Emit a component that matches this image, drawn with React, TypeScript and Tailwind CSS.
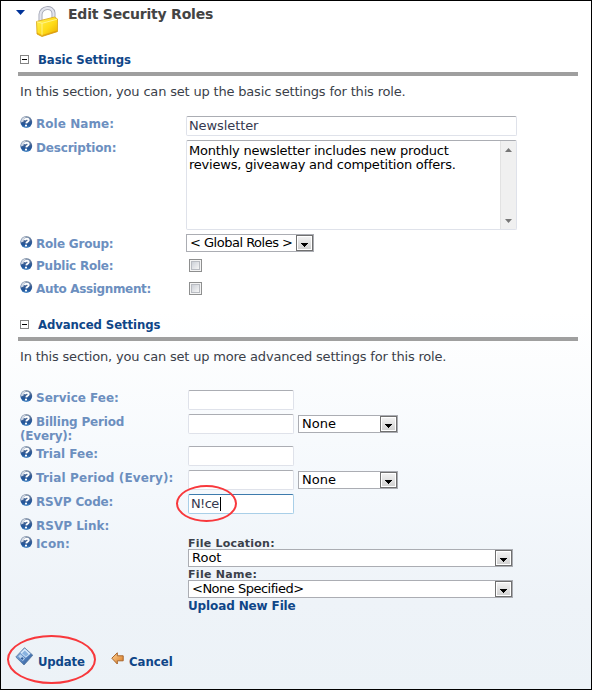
import type { ReactNode } from "react";

function HelpIcon() {
  return (
    <svg width="13" height="13" viewBox="0 0 13 13" className="mr-[3px] shrink-0">
      <defs>
        <linearGradient id="help" x1="0" y1="0" x2="0" y2="1">
          <stop offset="0" stopColor="#8d9bad" />
          <stop offset="0.45" stopColor="#3c5f94" />
          <stop offset="0.75" stopColor="#1f5499" />
          <stop offset="1" stopColor="#4a8ac8" />
        </linearGradient>
      </defs>
      <circle cx="6.3" cy="6" r="5.9" fill="url(#help)" />
      <path d="M1.200 6.500C.6 3.200 3 .9 6.300.7 4.600 1.800 3.600 3.400 3.600 5.600z" fill="#fff" opacity=".75" />
      <path d="M4.400 4C5.600 2.200 9 2.400 8.700 4.400 8.500 5.800 6.500 5.900 6.300 7.400" fill="none" stroke="#fff" strokeWidth="1.900" />
      <circle cx="6" cy="9.600" r="1.100" fill="#fff" />
    </svg>
  );
}

function Row({ label, height, labelClass = "", children }: { label: ReactNode; height: string; labelClass?: string; children?: ReactNode }) {
  return (
    <div className={`flex items-start ${height}`}>
      <div className={`flex w-[168px] shrink-0 items-start text-[12px] leading-[14px] font-bold whitespace-nowrap text-[#6c8fbf] ${labelClass}`}>
        <HelpIcon />
        <span className="pt-px">{label}</span>
      </div>
      {children}
    </div>
  );
}

function TextBox({ width, value = "", active = false }: { width: string; value?: string; active?: boolean }) {
  return (
    <div
      className={`flex h-5 shrink-0 items-center rounded-[2px] border bg-white pl-[2px] text-[13px] text-[#36394f] ${width} ${
        active ? "border-[#a9cfe8] border-t-[#3d7bad] tracking-[-0.6px]" : "border-[#dfe2ea] border-t-[#abadb3] tracking-[-0.1px]"
      }`}
    >
      <span>{value}</span>
      {active && <span className="ml-px h-[14px] w-px bg-black" />}
    </div>
  );
}

function SelectBox({ width, value, textClass = "" }: { width: string; value: string; textClass?: string }) {
  return (
    <div className={`flex h-[18px] shrink-0 items-stretch border border-[#abadb3] bg-white text-[13px] leading-[16px] text-black ${width}`}>
      <span className={`grow pl-[3px] whitespace-nowrap ${textClass}`}>{value}</span>
      <span className="flex w-[17px] shrink-0 items-center justify-center border border-[#707070] bg-linear-to-b from-[#f4f4f4] to-[#cfcfcf] pt-[3px] shadow-[inset_0_0_0_1px_#fff]">
        <svg width="7" height="4" viewBox="0 0 7 4" shapeRendering="crispEdges">
          <path d="M0 0h7v1H0zM1 1h5v1H1zM2 2h3v1H2zM3 3h1v1H3z" />
        </svg>
      </span>
    </div>
  );
}

function CheckBox() {
  return (
    <span className="mt-px ml-[3px] flex h-[13px] w-[13px] border border-[#8e8f8f] bg-[#f4f4f4] p-[1px]">
      <span className="grow border border-[#b9bcc2] bg-linear-to-br from-[#cdd1d8] to-[#f6f6f6]" />
    </span>
  );
}

function SectionHead({ title }: { title: string }) {
  return (
    <div className="ml-[17px] flex h-[25px] w-[560px] items-start border-b-4 border-[#9f9f9f] pt-px">
      <svg width="9" height="9" viewBox="0 0 9 9" className="mt-[3px] ml-[2px]" shapeRendering="crispEdges">
        <path d="M.5.5h8v8h-8z" fill="#fff" stroke="#848484" />
        <path d="M2 4h5v1H2z" fill="#000" />
      </svg>
      <h2 className="ml-[9px] font-['DejaVu_Sans_Condensed','DejaVu_Sans',sans-serif] text-[13px] leading-[15px] font-bold tracking-[-0.08px] text-[#0f4688]">{title}</h2>
    </div>
  );
}

function LockIcon() {
  return (
    <svg width="22" height="31" viewBox="0 0 22 31">
      <defs>
        <linearGradient id="lock" x1="0" y1="0" x2="1" y2="1">
          <stop offset="0" stopColor="#fff35a" />
          <stop offset=".55" stopColor="#ffdc18" />
          <stop offset="1" stopColor="#e9a900" />
        </linearGradient>
      </defs>
      <path d="M4.500 16V8.500C5 1 16.500-.5 17.500 7v6" fill="none" stroke="#a4a7b5" strokeWidth="4" />
      <path d="M4.500 16V8.500C5 1 16.500-.5 17.500 7v6" fill="none" stroke="#e3e5ee" strokeWidth="2.200" />
      <path d="M.5 15.500 18.500 11l3 2v12.500L6 30.500l-5-2.500z" fill="url(#lock)" stroke="#d9a514" strokeWidth=".8" />
      <path d="M.8 15.700 6 17.300 21.200 13.200M6 17.300V30" fill="none" stroke="#fff6a0" strokeWidth=".8" />
      <path d="M1 26.500 6 29l15.200-4.500V26L6 30.500 1 28z" fill="#d78d08" opacity=".5" />
    </svg>
  );
}

function SaveIcon() {
  return (
    <svg width="19" height="19" viewBox="0 0 19 19">
      <defs>
        <linearGradient id="save" x1="0" y1="0" x2="1" y2="1">
          <stop offset="0" stopColor="#9fc2e8" />
          <stop offset=".5" stopColor="#5b89c4" />
          <stop offset="1" stopColor="#244f8d" />
        </linearGradient>
      </defs>
      <path d="M9.500.7 17.800 8.200 9 18 .8 10z" fill="url(#save)" stroke="#54779f" strokeWidth=".8" />
      <path d="M9.700 1.500 15.500 6.800 10.800 10.800 5.400 5.800z" fill="#d9eafb" />
      <path d="M7 6.200 9.800 3.500l3.800 3.700-2.700 2.600z" fill="#88b2df" />
      <path d="M3.200 9.200 5.500 7.200 10 11.500 7.800 14z" fill="#b8d3ef" />
      <path d="m5.600 11.500 1.500-1.600 1.600 1.500-1.400 1.600z" fill="#315e9c" />
    </svg>
  );
}

function BackIcon() {
  return (
    <svg width="13" height="13" viewBox="0 0 13 13">
      <defs>
        <linearGradient id="back" x1="0" y1="0" x2="1" y2="1">
          <stop offset="0" stopColor="#ffd79d" />
          <stop offset="1" stopColor="#d8761c" />
        </linearGradient>
      </defs>
      <path d="M.8 6.200 6.300.8v3h5.900v5H6.300v3.200z" fill="url(#back)" stroke="#a8652b" strokeWidth="1" />
    </svg>
  );
}

function Ring({ className }: { className: string }) {
  return <span className={`pointer-events-none absolute rounded-[50%] border-2 border-[#f8383c] ${className}`} />;
}

export default function App() {
  return (
    <div className="flex h-[690px] w-[592px] flex-col overflow-hidden border border-black bg-[linear-gradient(to_bottom,#fff_0px,#fff_310px,#f4f8fc_490px,#eef3f8_600px,#ecf2f7_688px)] font-['DejaVu_Sans',Verdana,sans-serif] text-[13px] text-[#3b3f4a]">
      <header className="flex h-[50px] shrink-0 items-start">
        <svg width="9" height="5" viewBox="0 0 9 5" className="mt-[9px] ml-[15px]">
          <path d="M0 0h9L4.500 5z" fill="#003399" />
        </svg>
        <span className="mt-[5px] ml-[11px]">
          <LockIcon />
        </span>
        <h1 className="mt-1 ml-[10px] text-[14px] leading-[18px] font-bold tracking-[-0.22px] text-[#444]">Edit Security Roles</h1>
      </header>

      <section className="h-[265px] shrink-0">
        <SectionHead title="Basic Settings" />
        <p className="mt-[8px] ml-[19px] h-[32px] text-[13px] leading-[15px] tracking-[-0.18px] whitespace-nowrap">In this section, you can set up the basic settings for this role.</p>
        <div className="pl-[19px]">
          <Row label="Role Name:" height="h-6" labelClass="-mr-[2px] tracking-[0.06px]">
            <TextBox width="w-[331px]" value="Newsletter" />
          </Row>
          <Row label="Description:" height="h-[94px]" labelClass="-mr-[2px] tracking-[-0.18px]">
            <div className="flex h-[90px] w-[331px] rounded-[2px] border border-[#dfe2ea] border-t-[#abadb3] bg-white">
              <div className="grow pt-[3px] pl-[2px] text-[13px] leading-[14px] tracking-[-0.22px] whitespace-nowrap text-black">
                Monthly newsletter includes new product
                <br />
                reviews, giveaway and competition offers.
              </div>
              <div className="flex w-4 flex-col items-center justify-between border-l border-[#e2e2e2] bg-[#f0f0f0] pt-[7px] pb-[6px]">
                <svg width="7" height="4" viewBox="0 0 7 4">
                  <path d="M0 4h7L3.500 0z" fill="#777" />
                </svg>
                <svg width="7" height="4" viewBox="0 0 7 4">
                  <path d="M0 0h7L3.500 4z" fill="#777" />
                </svg>
              </div>
            </div>
          </Row>
          <Row label="Role Group:" height="h-6" labelClass="-mr-[2px] pt-[2px] tracking-[-0.22px]">
            <SelectBox width="w-[128px]" value="< Global Roles >" textClass="tracking-[-0.5px]" />
          </Row>
          <Row label="Public Role:" height="h-[23px]" labelClass="-mr-[2px] tracking-[-0.22px]">
            <CheckBox />
          </Row>
          <Row label="Auto Assignment:" height="h-[23px]" labelClass="-mr-[2px] tracking-[-0.35px]">
            <CheckBox />
          </Row>
        </div>
      </section>

      <section className="h-[331px] shrink-0">
        <SectionHead title="Advanced Settings" />
        <p className="mt-[8px] ml-[19px] h-[41px] text-[13px] leading-[15px] tracking-[-0.19px] whitespace-nowrap">In this section, you can set up more advanced settings for this role.</p>
        <div className="pl-[19px]">
          <Row label="Service Fee:" height="h-6">
            <TextBox width="w-[106px]" />
          </Row>
          <Row label={<>Billing Period<br /><span className="-ml-4">(Every):</span></>} height="h-8" labelClass="tracking-[-0.18px]">
            <TextBox width="w-[106px]" />
            <span className="mt-px ml-1">
              <SelectBox width="w-[100px]" value="None" textClass="tracking-normal" />
            </span>
          </Row>
          <Row label="Trial Fee:" height="h-6">
            <TextBox width="w-[106px]" />
          </Row>
          <Row label="Trial Period (Every):" height="h-6" labelClass="tracking-[0.12px]">
            <TextBox width="w-[106px]" />
            <span className="mt-px ml-1">
              <SelectBox width="w-[100px]" value="None" />
            </span>
          </Row>
          <Row label="RSVP Code:" height="h-6" labelClass="tracking-[-0.15px]">
            <div className="relative">
              <TextBox width="w-[106px]" value="N!ce" active />
              <Ring className="-top-[9px] -left-[12px] h-[37px] w-[61px]" />
            </div>
          </Row>
          <Row label="RSVP Link:" height="h-[18px]" />
          <Row label="Icon:" height="h-[80px]" labelClass="tracking-[0.15px]">
            <div className="text-[11px] leading-[15px] font-bold">
              <div className="h-[13px] tracking-[0.22px]">File Location:</div>
              <div className="h-[18px] font-normal">
                <SelectBox width="w-[325px]" value="Root" />
              </div>
              <div className="h-[13px] tracking-[0.3px]">File Name:</div>
              <div className="h-[18px] font-normal">
                <SelectBox width="w-[325px]" value="<None Specified>" textClass="tracking-[-0.5px]" />
              </div>
              <div className="text-[12px] leading-[16px] tracking-[-0.13px] text-[#0f4688]">Upload New File</div>
            </div>
          </Row>
        </div>
      </section>

      <footer className="flex items-start font-['DejaVu_Sans_Condensed','DejaVu_Sans',sans-serif] text-[13px] leading-[15px] font-bold text-[#0f4688]">
        <div className="relative ml-[14px] flex w-[96px]">
          <SaveIcon />
          <span className="mt-[7px] ml-1 tracking-[-0.15px]">Update</span>
          <Ring className="-top-[12px] -left-[8px] h-[49px] w-[89px]" />
        </div>
        <span className="mt-[5px]">
          <BackIcon />
        </span>
        <span className="mt-[7px] ml-[5px]">Cancel</span>
      </footer>
    </div>
  );
}
